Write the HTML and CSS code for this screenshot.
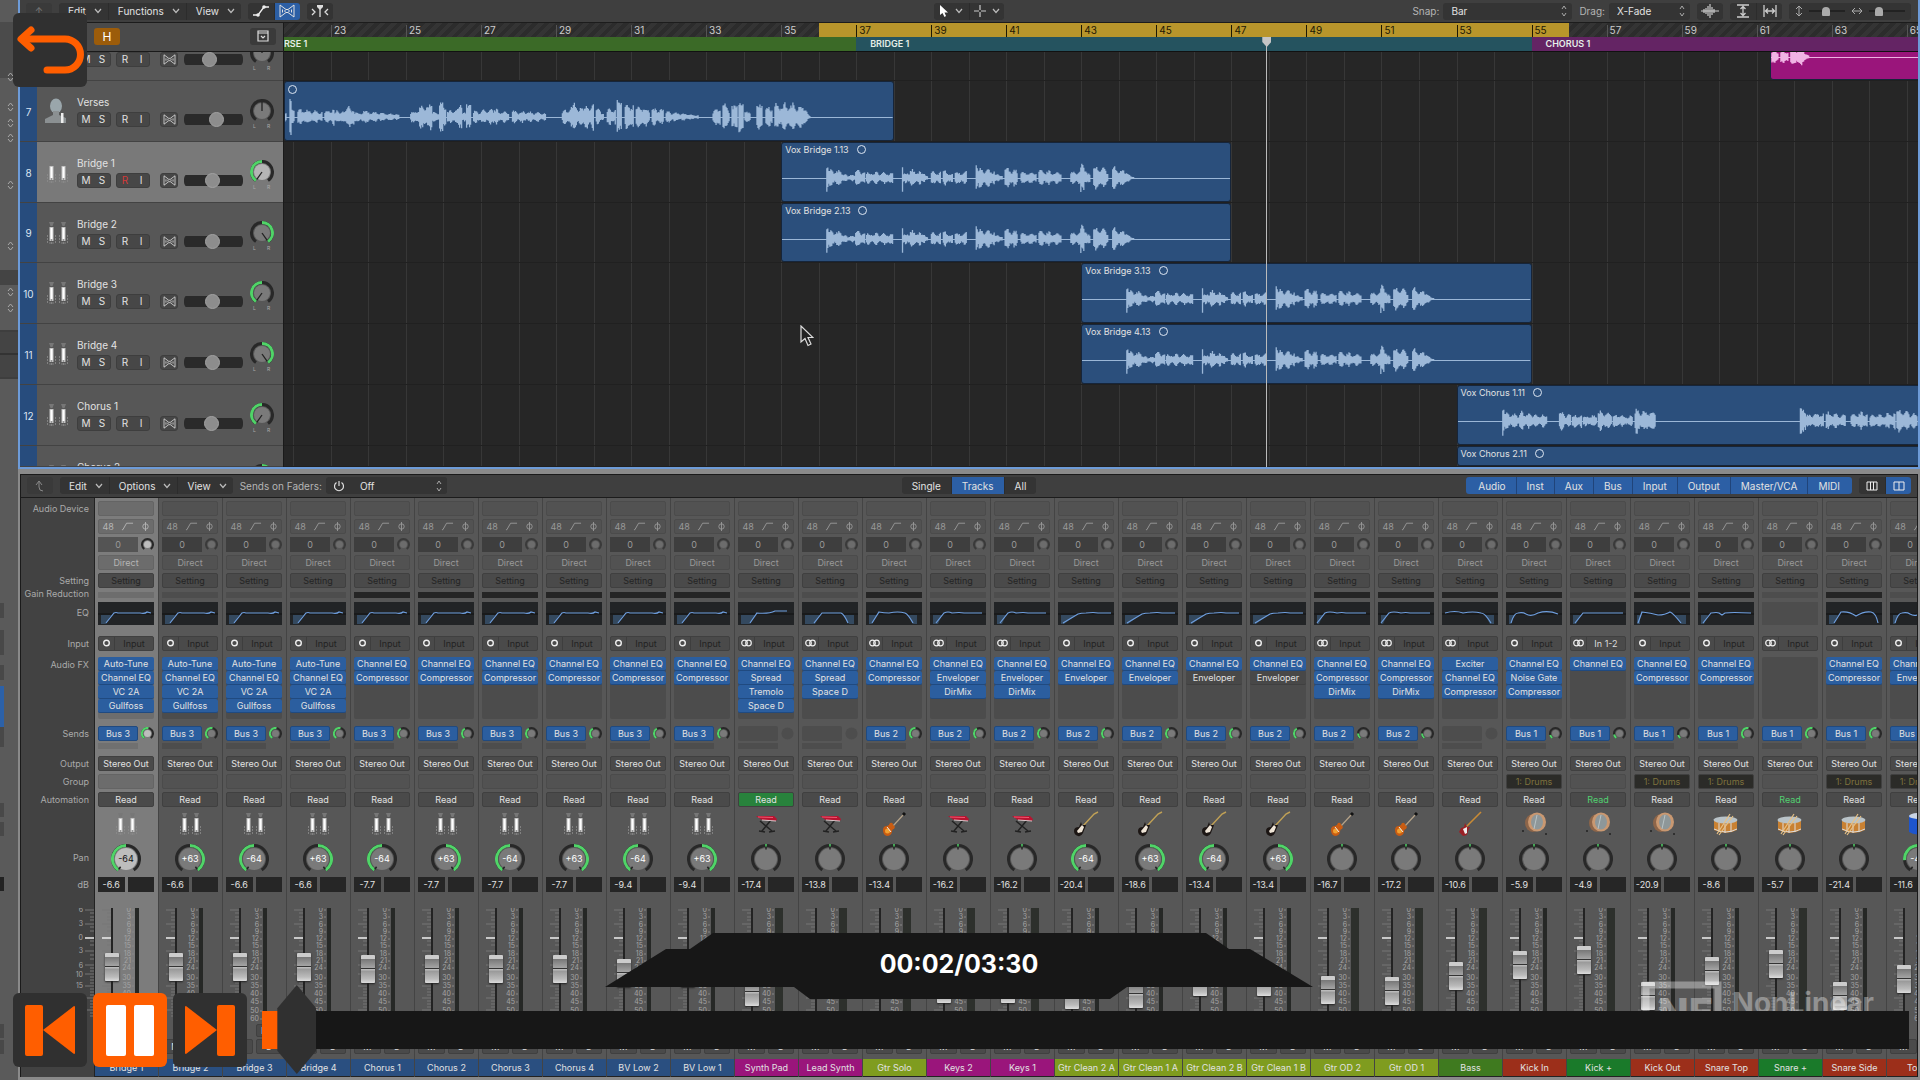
FILE: index.html
```html
<!DOCTYPE html>
<html lang="en">
<head>
  <meta charset="UTF-8">
  <meta name="viewport" content="width=device-width, initial-scale=1.0">
  <title>Vocal Mixing</title>

  <link rel="stylesheet" href="styles.css">
</head>
<body>
  <svg class="defs" aria-hidden="true">
    <symbol id="chev" viewBox="0 0 8 6"><path d="M1 1l3 3.5L7 1" fill="none" stroke="#bbb" stroke-width="1.2"/></symbol>
    <symbol id="flex" viewBox="0 0 18 14"><path d="M2 1l6 4.500h2L16 1v12l-6-4.500H8L2 13zM4.500 5.500v3M7 6v2M11 6v2M13.500 5.500v3" fill="none" stroke="currentColor"/></symbol>
    <symbol id="lowcut" viewBox="0 0 14 10"><path d="M1 9h1l4-7h7" fill="none" stroke="currentColor"/></symbol>
    <symbol id="phase" viewBox="0 0 10 12"><circle cx="5" cy="6" r="3" fill="none" stroke="currentColor"/><path d="M5 1v10" stroke="currentColor"/></symbol>
    <symbol id="mono" viewBox="0 0 12 10"><circle cx="6" cy="5" r="2.800" fill="none" stroke="#eee" stroke-width="1.400"/></symbol>
    <symbol id="stereo" viewBox="0 0 12 10"><circle cx="4" cy="5" r="2.800" fill="none" stroke="#eee" stroke-width="1.200"/><circle cx="8" cy="5" r="2.800" fill="none" stroke="#eee" stroke-width="1.200"/></symbol>

    <symbol id="mics" viewBox="0 0 26 26">
      <g id="mic"><path d="M5 2h5L8.500 6h-2z" fill="#777"/><rect x="5.500" y="7" width="4" height="14" fill="#c4c4c4"/><rect x="6.500" y="8" width="2" height="11" fill="#fff"/><path d="M3.500 15v9M11.500 15v9M5 23h5M7.500 19v5" stroke="#8c8c8c" stroke-width=".8" stroke-dasharray="2 1"/></g>
      <use href="#mic" x="12"/>
    </symbol>
    <symbol id="singer" viewBox="0 0 26 26"><ellipse cx="12" cy="8" rx="6" ry="7.500" fill="#9aa6ab"/><path d="M9 13h6v4l7 3v5H1v-4l8-4z" fill="#8b9092"/><rect x="17" y="15" width="2.500" height="10" fill="#eee"/></symbol>
    <symbol id="synth" viewBox="0 0 26 26"><path d="M7 10l12 10M18 9L9 20M6 20l6 1M16 21l6-1" stroke="#222" stroke-width="1.500"/><path d="M3 5l18 0 3 3-1 2-14-1z" fill="#b71430"/><path d="M5 6l15 .5" stroke="#ef5770"/><path d="M9 9l14 1" stroke="#eee" stroke-width=".8"/></symbol>
    <symbol id="lespaul" viewBox="0 0 26 26"><path d="M12 15L23 3" stroke="#b5a389" stroke-width="1.200"/><path d="M22 4l2-2" stroke="#111" stroke-width="3"/><path d="M2 19q0-4 4-4 2 0 3-3 3-1 3 2 3 1 1 4-2 0-2 3-1 4-5 4-4-1-4-6z" fill="#c95c12"/><ellipse cx="6.500" cy="20" rx="2.500" ry="2.500" fill="#f0a030"/><path d="M6 16l4 5" stroke="#eee"/></symbol>
    <symbol id="strat" viewBox="0 0 26 26"><path d="M10 15L21 3l4-2" fill="none" stroke="#bfa056" stroke-width="1.500"/><path d="M1 20q0-4 5-4l2-5 1 3 4 0-1 3q-1 2-2 5-2 4-5 3-4-1-4-5z" fill="#1c1614"/><path d="M4 20l5-6 2 2-2 5-4 1z" fill="#eee4d6"/></symbol>
    <symbol id="bass" viewBox="0 0 26 26"><path d="M8 17L24 1" stroke="#c98b35" stroke-width="1.600"/><path d="M2 21l2-4 3-1 1-4 2 4 3 0-2 4-1 4-4 1z" fill="#9a2026"/><path d="M6 18l4-2v6l-2 1z" fill="#eee"/></symbol>
    <symbol id="kick" viewBox="0 0 26 26"><ellipse cx="12" cy="12" rx="8" ry="9" fill="#8d6549"/><ellipse cx="16" cy="11" rx="9" ry="9.500" fill="#c99871"/><ellipse cx="16" cy="11" rx="6" ry="7.500" fill="#8e9799"/><path d="M16 4l-3 14" stroke="#b9c3c5"/><circle cx="2" cy="20" r="1" fill="#222"/><circle cx="25" cy="23" r="1" fill="#222"/></symbol>
    <symbol id="snare" viewBox="0 0 26 26"><path d="M1 9v10q12 6 23 0V9z" fill="#c98132"/><path d="M1 18q12 6 23 0M6 12v9M12 13v9M18 12v9" fill="none" stroke="#ddd"/><ellipse cx="12.500" cy="9" rx="12" ry="3.500" fill="#b9c3c8"/><path d="M4 23L17 3M6 24L20 5" stroke="#e8c184" stroke-width="1.200"/></symbol>
    <symbol id="tom" viewBox="0 0 26 26"><path d="M4 4v17q9 5 18 0V4z" fill="#1e55cc"/><ellipse cx="13" cy="5" rx="9" ry="3" fill="#c9d4e4"/></symbol>
  </svg>

  <div class="app">
    <aside class="inspector">
      <svg width="18" height="1080">
        <path d="M0 22h18v56H0z" fill="#4b4b4b"/>
        <path d="M0 270h18v15H0z" fill="#444"/>
        <path d="M0 331h18M0 354h18M0 378h18" stroke="#222" stroke-width="1"/>
        <path d="M0 332h18v45H0z" fill="#444"/><path d="M0 354h18" stroke="#222"/>
        <g fill="none" stroke="#aaa" id="steppers"></g>
        <path d="M0 603h4v15H0zM0 630h4v25H0zM0 665h4v15H0zM0 727h4v20H0zM0 803h4v14H0zM0 822h4v14H0zM0 1024h4v14H0zM0 1040h4v14H0z" fill="#484848"/>
        <path d="M0 686h4v41H0z" fill="#2c61a8"/><path d="M0 877h4v14H0z" fill="#222"/>
      </svg>
    </aside>

    <main class="workspace">
      <section class="arrange">
        <header class="toolbar">
          <div class="tools">
            <button class="icon-button up" aria-label="Up">↑</button>
            <div class="group menus">
              <button>Edit<svg><use href="#chev"/></svg></button>
              <button>Functions<svg><use href="#chev"/></svg></button>
              <button>View<svg><use href="#chev"/></svg></button>
            </div>
            <div class="group icons">
              <button aria-label="Automation"><svg width="18" height="14" viewBox="0 0 18 14"><path d="M1 11h5l6-8h5" fill="none" stroke="#eee" stroke-width="1.300"/><circle cx="6" cy="11" r="1.800" fill="#eee"/><circle cx="12" cy="3" r="1.800" fill="#eee"/></svg></button>
              <button class="on" aria-label="Flex"><svg width="18" height="14"><use href="#flex"/></svg></button>
            </div>
            <div class="group icons">
              <button aria-label="Catch playhead"><svg width="18" height="14" viewBox="0 0 18 14"><path d="M1 5l3 3-3 3M17 5l-3 3 3 3M9 4v9" fill="none" stroke="#ddd" stroke-width="1.300"/><path d="M6 1h6v2L9 6 6 3z" fill="#ddd"/></svg></button>
            </div>
          </div>
          <div class="group icons">
            <button class="wide" aria-label="Pointer tool"><svg width="10" height="14" viewBox="0 0 10 14"><path d="M1 1v10l2.500-2 2 4 1.500-1-1.500-3.500H9z" fill="#fff"/></svg><svg class="chev"><use href="#chev"/></svg></button>
            <button class="wide" aria-label="Marquee tool"><svg width="12" height="12" viewBox="0 0 12 12"><path d="M6 0v5M6 7v5M0 6h5M7 6h5" stroke="#ccc" stroke-width="1.200"/></svg><svg class="chev"><use href="#chev"/></svg></button>
          </div>
          <div class="tools end">
            <label for="snap">Snap:</label>
            <select id="snap" class="snap"><option>Bar</option></select>
            <label for="drag">Drag:</label>
            <select id="drag" class="drag"><option>X-Fade</option></select>
            <div class="group icons">
              <button aria-label="Waveform zoom"><svg width="18" height="14" viewBox="0 0 18 14"><path d="M0 7h18M3 5v4M5 4v6M7 2v10M9 0v14M11 3v8M13 5v4" stroke="#ccc" stroke-width="1.200"/></svg></button>
            </div>
            <div class="group icons">
              <button aria-label="Fit height"><svg width="14" height="14" viewBox="0 0 14 14"><path d="M1 1h12M1 13h12M7 3v8M4.500 5L7 2.500 9.500 5M4.500 9L7 11.500 9.500 9" fill="none" stroke="#ccc" stroke-width="1.300"/></svg></button>
              <button aria-label="Fit width"><svg width="14" height="14" viewBox="0 0 14 14"><path d="M1 1v12M13 1v12M3 7h8M5 4.500L2.500 7 5 9.500M9 4.500L11.500 7 9 9.500" fill="none" stroke="#ccc" stroke-width="1.300"/></svg></button>
            </div>
            <div class="group zooms">
              <svg width="8" height="12" viewBox="0 0 8 12"><path d="M4 1v10M1 4l3-3 3 3M1 8l3 3 3-3" fill="none" stroke="#aaa"/></svg>
              <input type="range" aria-label="Vertical zoom" value="45">
              <svg width="12" height="8" viewBox="0 0 12 8"><path d="M1 4h10M4 1L1 4l3 3M8 1l3 3-3 3" fill="none" stroke="#aaa"/></svg>
              <input type="range" aria-label="Horizontal zoom" value="20">
            </div>
          </div>
        </header>

        <div class="arrange-body">
          <div class="track-column">
            <div class="track-tools">
              <button class="hide-button">H</button>
              <button class="config-button" aria-label="Track header options"><svg width="12" height="12" viewBox="0 0 12 12"><path d="M1 1h10v10H1zM1 3h10M4 6l2 2 2-2" fill="none" stroke="#ddd" stroke-width="1.200"/></svg></button>
            </div>
            <div class="tracks rows" id="tracks"></div>
          </div>
          <div class="timeline">
            <div class="ruler" id="ruler"></div>
            <div class="markers" id="markers"></div>
            <div class="canvas">
              <div class="gridlines" id="gridlines"></div>
              <div class="lanes rows" id="lanes"></div>
            </div>
            <div class="playhead" id="playhead"></div>
          </div>
        </div>
      </section>

      <section class="mixer">
        <header class="toolbar">
          <div class="tools">
            <button class="icon-button" aria-label="Up"><svg width="10" height="12" viewBox="0 0 10 12"><path d="M1 5l3-4 3 4M4 1v6q0 4 4 4" fill="none" stroke="#888"/></svg></button>
            <div class="group menus">
              <button>Edit<svg><use href="#chev"/></svg></button>
              <button>Options<svg><use href="#chev"/></svg></button>
              <button>View<svg><use href="#chev"/></svg></button>
            </div>
            <label for="sends">Sends on Faders:</label>
            <div class="group sends-group">
              <button aria-label="Sends on faders power"><svg width="12" height="12" viewBox="0 0 12 12"><path d="M6 1v5M3.500 2.500a4.500 4.500 0 1 0 5 0" fill="none" stroke="#ddd" stroke-width="1.200"/></svg></button>
              <select id="sends"><option>Off</option></select>
            </div>
          </div>
          <div class="group tabs">
            <button>Single</button>
            <button class="on">Tracks</button>
            <button>All</button>
          </div>
          <div class="tools end">
            <div class="group filters">
              <button>Audio</button><button>Inst</button><button>Aux</button><button>Bus</button><button>Input</button><button>Output</button><button>Master/VCA</button><button>MIDI</button>
            </div>
            <div class="group icons">
              <button aria-label="Narrow strips"><svg width="12" height="10" viewBox="0 0 12 10"><path d="M1 1h10v8H1zM4.500 1v8M7.500 1v8" fill="none" stroke="#eee"/></svg></button>
              <button class="on" aria-label="Wide strips"><svg width="12" height="10" viewBox="0 0 12 10"><path d="M1 1h10v8H1zM6 1v8" fill="none" stroke="#eee"/></svg></button>
            </div>
          </div>
        </header>
        <div class="mixer-body">
          <div class="labels strip-rows">
            <span class="l-device">Audio Device</span>
            <span class="l-setting">Setting</span>
            <span class="l-gain">Gain Reduction</span>
            <span class="l-eq">EQ</span>
            <span class="l-input">Input</span>
            <span class="l-fx">Audio FX</span>
            <span class="l-sends">Sends</span>
            <span class="l-output">Output</span>
            <span class="l-group">Group</span>
            <span class="l-auto">Automation</span>
            <span class="l-pan">Pan</span>
            <span class="l-db">dB</span>
            <svg class="l-scale" width="60" height="114" id="label-scale"></svg>
          </div>
          <div class="strips" id="strips"></div>
        </div>
      </section>
    </main>
  </div>

  <!-- video player -->
  <button class="player-button back" aria-label="Back">
    <svg viewBox="0 0 74 74"><path d="M10 26h42a15 15 0 0 1 0 31H34" fill="none" stroke="#ff5e00" stroke-width="7" stroke-linecap="round"/><path d="M18 17L8 26l10 9" fill="none" stroke="#ff5e00" stroke-width="7" stroke-linecap="round" stroke-linejoin="round"/></svg>
  </button>

  <svg class="cursor" width="14" height="22" viewBox="0 0 14 22"><path d="M1 1v16l4-3.500 3 7 3-1.500-3-6.500h5z" fill="#222" stroke="#ddd" stroke-width="1.200"/></svg>

  <div class="watermark">
    <svg width="84" height="60" viewBox="0 0 84 60"><path d="M4 58V4h72v54" fill="none" stroke="#fff" stroke-width="7"/><text x="16" y="46" font-size="40" font-weight="800" fill="#fff">NE</text></svg>
    <span>NonLinear</span>
  </div>

  <div class="time">
    <svg viewBox="0 0 708 66"><path d="M0 54L61 16h24L108 0h493l23 16h21l63 38H522l-17 12H205l-16-12z" fill="#171717"/></svg>
    <span>00:02/03:30</span>
  </div>

  <div class="player">
    <button class="player-button" aria-label="Previous"><svg viewBox="0 0 74 74"><rect x="12" y="12" width="18" height="51" rx="2" fill="#ff5e00"/><path d="M30 37L61 13q1 0 1 1v46q0 1-1 1z" fill="#ff5e00"/></svg></button>
    <button class="player-button pause" aria-label="Pause"><svg viewBox="0 0 74 74"><rect x="13" y="12" width="20" height="51" rx="2" fill="#fff"/><rect x="41" y="12" width="20" height="51" rx="2" fill="#fff"/></svg></button>
    <button class="player-button" aria-label="Next"><svg viewBox="0 0 74 74"><rect x="44" y="12" width="18" height="51" rx="2" fill="#ff5e00"/><path d="M44 37L13 13q-1 0-1 1v46q0 1 1 1z" fill="#ff5e00"/></svg></button>
    <input class="seek" type="range" min="0" max="210" value="2" aria-label="Seek">
  </div>

  <script src="script.js"></script>
</body>
</html>
```
FILE: styles.css
```css
* {
  box-sizing: border-box;
}

body {
  margin: 0;
  height: 100vh;
  overflow: hidden;
  background: #8a8a8a;
  color: #e2e2e2;
  font-family: Inter, "Liberation Sans", sans-serif;
  font-size: 10px;
}

button,
select,
input {
  font: inherit;
  color: inherit;
  margin: 0;
  padding: 0;
  border: none;
  background: none;
}

svg {
  display: block;
  flex: none;
}

.defs {
  position: absolute;
  width: 0;
  height: 0;
}

.app {
  display: flex;
  height: 100vh;
  background: #8a8a8a;
}

.inspector {
  flex: 0 0 18px;
  overflow: hidden;
  background: #5a5a5a;
}

.workspace {
  flex: 1;
  min-width: 0;
  display: flex;
  flex-direction: column;
  padding: 0 0 3px 0;
}

/* toolbars */
.toolbar {
  flex: 0 0 23px;
  display: grid;
  grid-template-columns: 1fr auto 1fr;
  align-items: center;
  padding: 0 7px 0 6px;
  background: #3f3f3f;
  border-bottom: 1px solid #1c1c1c;
}

.tools {
  display: flex;
  align-items: center;
  gap: 7px;
}

.tools.end {
  justify-content: flex-end;
}

.tools label {
  color: #b5b5b5;
  margin-right: -3px;
}

.group {
  display: flex;
  height: 17px;
  background: #343434;
  border-radius: 3px;
  overflow: hidden;
}

.group button + button {
  border-left: 1px solid #2c2c2c;
}

.group .on {
  background: #2c5fa5;
}

.icon-button {
  width: 26px;
  height: 17px;
  display: grid;
  place-content: center;
  border-radius: 3px;
  background: #3a3a3a;
  color: #777;
}

.menus button {
  display: flex;
  align-items: center;
  gap: 8px;
  padding: 0 6px 0 9px;
}

.menus svg,
.chev {
  width: 8px;
  height: 6px;
}

.icons button {
  width: 26px;
  display: grid;
  place-content: center;
}

.icons .wide {
  width: 35px;
  grid-auto-flow: column;
  align-items: center;
  gap: 6px;
}

select {
  appearance: none;
  height: 17px;
  padding: 0 8px;
  border-radius: 3px;
  background: #343434 url("data:image/svg+xml,%3Csvg xmlns='http://www.w3.org/2000/svg' width='6' height='12'%3E%3Cpath d='M1 4l2-3 2 3M1 8l2 3 2-3' fill='none' stroke='%23aaa'/%3E%3C/svg%3E") no-repeat right 5px center;
}

.snap {
  width: 129px;
}

.drag {
  width: 81px;
}

.sends-group button {
  width: 26px;
  display: grid;
  place-content: center;
}

.sends-group select {
  width: 95px;
}

.tabs button {
  padding: 0 10px;
}

.filters {
  padding: 0 2px;
  background: #2c5fa5;
}

.filters button {
  padding: 0 10px;
}

.filters button + button {
  border-left: 1px solid #20447a;
}

.zooms {
  align-items: center;
  gap: 6px;
  padding: 0 6px;
}

.zooms input {
  appearance: none;
  width: 36px;
  height: 12px;
  background: linear-gradient(#222, #222) center / 100% 2px no-repeat;
}

.zooms input::-webkit-slider-thumb {
  appearance: none;
  width: 8px;
  height: 9px;
  border-radius: 4px 4px 1px 1px;
  background: #aaa;
}

/* arrange window */
.arrange {
  flex: 0 0 43.4vh;
  display: flex;
  flex-direction: column;
  overflow: hidden;
  border: 2px solid #6d9bd8;
  border-top: none;
}

.arrange-body {
  flex: 1;
  min-height: 0;
  display: flex;
}

.track-column {
  flex: 0 0 264px;
  display: flex;
  flex-direction: column;
  background: #4a4a4a;
  border-right: 1px solid #1a1a1a;
}

.track-tools {
  flex: 0 0 29px;
  display: flex;
  justify-content: space-between;
  align-items: center;
  padding: 0 7px 2px 74px;
  border-bottom: 1px solid #1a1a1a;
}

.hide-button {
  width: 26px;
  height: 17px;
  border-radius: 3px;
  background: #9c5c0a;
  color: #fff;
  font-size: 12px;
}

.config-button {
  width: 26px;
  height: 17px;
  border-radius: 3px;
  background: #3a3a3a;
  display: grid;
  place-content: center;
}

.rows {
  flex: 1;
  min-height: 0;
  display: grid;
  grid-template-rows: 29px repeat(6, 1fr) 21px;
}

.track {
  display: flex;
  overflow: hidden;
  background: #575757;
  border-bottom: 1px solid #434343;
}

.track.selected {
  background: #797979;
}

.track:first-child {
  align-items: flex-end;
  padding-bottom: 13px;
}

.track-number {
  flex: 0 0 17px;
  align-self: stretch;
  display: grid;
  place-content: center;
  padding-top: 2px;
  background: #274c7d;
  color: #dde6f2;
}

.track-icon {
  width: 26px;
  height: 26px;
  margin: 17px 7px 0 7px;
}

.track-main {
  width: 107px;
  padding-top: 14px;
}

.track-name {
  height: 14px;
  line-height: 14px;
  white-space: nowrap;
}

.track-buttons {
  display: flex;
  gap: 5px;
  margin-top: 3px;
}

.track-buttons span {
  display: flex;
  height: 15px;
  border-radius: 3px;
  background: #474747;
  border: 1px solid #3e3e3e;
}

.track-buttons button {
  width: 16px;
  line-height: 13px;
  display: grid;
  place-content: center;
}

.track-buttons span:last-child {
  margin-left: 5px;
}

.track-buttons .armed {
  color: #d43a3a;
}

.volume {
  appearance: none;
  flex: none;
  width: 59px;
  height: 15px;
  margin-top: 31px;
  background: linear-gradient(#2a2a2a, #2a2a2a) center / 100% 11px no-repeat;
  border-radius: 6px;
}

.volume::-webkit-slider-thumb {
  appearance: none;
  width: 15px;
  height: 15px;
  border-radius: 50%;
  background: #8d8d8d;
  border: 1px solid #a2a2a2;
}

.track-pan {
  margin: 18px 0 0 7px;
}

.track:first-child .track-pan {
  margin-bottom: -6px;
}

.track-pan text {
  font-size: 5px;
  fill: #aaa;
}

.timeline {
  flex: 1;
  min-width: 0;
  display: flex;
  flex-direction: column;
  position: relative;
  overflow: hidden;
  background: #262626;
}

.ruler {
  flex: 0 0 14px;
  position: relative;
  overflow: hidden;
  background: repeating-linear-gradient(135deg, #2c2c2c 0 4px, #343434 4px 8px);
}

.cycle {
  position: absolute;
  height: 100%;
  background: #b8952b;
}

.bar-number {
  position: absolute;
  top: 2px;
  height: 12px;
  line-height: 10px;
  padding-left: 2px;
  border-left: 1px solid #555;
  color: #ccc;
}

.bar-number.in-cycle {
  color: #1d1804;
  border-color: #1d1804;
}

.markers {
  flex: 0 0 15px;
  position: relative;
  border-bottom: 1px solid #111;
  overflow: hidden;
}

.marker {
  position: absolute;
  height: 100%;
  padding-left: 14px;
  line-height: 14px;
  font-size: 9px;
  font-weight: 600;
  color: #e6efe9;
}

.marker.verse {
  background: #3b6a27;
  padding-left: 0;
}

.marker.bridge {
  background: #25535f;
}

.marker.chorus {
  background: #642464;
}

.canvas {
  flex: 1;
  min-height: 0;
  display: grid;
}

.gridlines,
.lanes {
  grid-area: 1 / 1;
  position: relative;
}

.gridlines i {
  position: absolute;
  height: 100%;
  width: 1px;
  background: #373737;
}

.lane {
  position: relative;
  overflow: hidden;
  border-bottom: 1px solid #202020;
}

.region {
  position: absolute;
  top: 0;
  bottom: 0;
  overflow: hidden;
  border-radius: 3px;
  background: #2b4f7c;
  border: 1px solid #16253a;
  font-size: 9px;
  line-height: 13px;
  white-space: nowrap;
}

.region.pink {
  top: -31px;
  background: #9a157b;
}

.region svg {
  position: absolute;
  left: 0;
  top: 0;
  width: 100%;
  height: 58px;
}

.region .title {
  display: flex;
  align-items: center;
  gap: 8px;
  padding-left: 3px;
}

.region .title::after {
  content: "";
  width: 7px;
  height: 7px;
  border: 1px solid #dde6f2;
  border-radius: 50%;
}

.region .title:empty {
  height: 15px;
}

.playhead {
  position: absolute;
  top: 14px;
  bottom: 0;
  width: 1px;
  background: #bbb;
}

.playhead::before {
  content: "";
  position: absolute;
  left: -4px;
  width: 9px;
  height: 10px;
  background: #c5c5c5;
  clip-path: polygon(0 0, 100% 0, 100% 50%, 50% 100%, 0 50%);
}

/* mixer */
.mixer {
  flex: 1;
  min-height: 0;
  margin: 5px 2px 0 2px;
  display: flex;
  flex-direction: column;
  overflow: hidden;
  background: #575757;
  border: 1px solid #1a1a1a;
  border-bottom: none;
}

.mixer .toolbar {
  padding-right: 6px;
}

.mixer-body {
  flex: 1;
  min-height: 0;
  display: flex;
}

.strip-rows {
  display: grid;
  gap: 3px;
  padding-top: 3px;
  grid-template-columns: 100%;
  grid-template-rows: 15px 15px 15px 15px 15px 7px 24px 23px 65px 28px 18px 15px 15px 28px 33px 15px 1fr 12px 14px 20px;
  align-items: end;
  font-size: 9px;
}

.labels {
  flex: 0 0 74px;
  padding-right: 5px;
  background: #424242;
  border-right: 1px solid #222;
  color: #aaa;
  text-align: right;
  line-height: 15px;
  white-space: nowrap;
}

.l-device { grid-row: 1; }
.l-setting { grid-row: 5; }
.l-gain { grid-row: 6; line-height: 9px; }
.l-eq { grid-row: 7; align-self: center; }
.l-input { grid-row: 8; }
.l-fx { grid-row: 9; align-self: start; padding-top: 3px; }
.l-sends { grid-row: 10; align-self: start; padding-top: 4px; }
.l-output { grid-row: 11; }
.l-group { grid-row: 12; }
.l-auto { grid-row: 13; }
.l-pan { grid-row: 15; align-self: center; }
.l-db { grid-row: 16; }

.l-scale {
  grid-row: 17;
  align-self: start;
  justify-self: end;
  margin: 13px -5px 0 0;
}

.l-scale text,
.fader text {
  font-size: 7px;
  fill: #a4a4a4;
  text-anchor: end;
}

.strips {
  flex: 1;
  min-width: 0;
  display: flex;
  overflow: hidden;
}

.strip {
  flex: 0 0 64px;
  padding-left: 3px;
  padding-right: 4px;
  border-right: 1px solid #444;
}

.strip.selected {
  background: #7c7c7c;
}

.slot {
  height: 15px;
  width: 100%;
  display: flex;
  justify-content: center;
  align-items: center;
  border-radius: 2px;
  background: #4a4a4a;
  border: 1px solid #404040;
  white-space: nowrap;
}

.slot.faint {
  background: #525252;
  border-color: #4b4b4b;
  color: #999;
}

.selected .slot.faint {
  background: #6c6c6c;
  border-color: #646464;
  color: #b5b5b5;
}

.slot.three {
  justify-content: space-around;
}

.slot.setting {
  color: #242424;
}

.pair {
  display: flex;
  width: 100%;
  gap: 3px;
  align-items: center;
}

.pair.record {
  justify-content: flex-end;
}

.record .slot {
  width: 26px;
  height: 13px;
  justify-content: flex-start;
  padding-left: 4px;
}

.gain {
  flex: 1;
  height: 15px;
  line-height: 15px;
  text-align: center;
  background: #3e3e3e;
  color: #999;
}

.selected .gain {
  background: #545454;
}

.gr {
  height: 6px;
  background: #4d4d4d;
}

.selected .gr {
  background: #6d6d6d;
}

.gr.active {
  background: #252525;
}

.eq {
  width: 100%;
  height: 23px;
  background: #222426;
}

.eq.none {
  background: #4d4d4d;
}

.input-slot span {
  flex: 1;
  line-height: 13px;
  text-align: center;
  border-left: 1px solid #3e3e3e;
  color: #222;
}

.input-slot .live {
  color: #ddd;
}

.fx-list {
  height: 62px;
  width: 100%;
  background: #4c4c4c;
  border-radius: 2px;
}

.selected .fx-list {
  background: #6d6d6d;
}

.fx-list button {
  display: block;
  width: 100%;
  height: 14px;
  line-height: 13px;
  white-space: nowrap;
  border-radius: 2px;
  background: #2b5e9f;
  border-bottom: 1px solid #204a80;
}

.fx-list .bypassed {
  background: #484848;
  border-color: #404040;
}

.sends {
  align-self: stretch;
  padding-top: 4px;
}

.send {
  flex: 1;
  height: 15px;
  border-radius: 2px;
  background: #2b5e9f;
  border: 1px solid #204a80;
  line-height: 13px;
}

.send.empty,
.send-next {
  background: #4d4d4d;
  border: none;
}

.send-next {
  width: 40px;
  height: 6px;
  margin-top: 2px;
}

.selected .send-next {
  background: #707070;
}

.slot.drums {
  background: #2b2b28;
  color: #7e713d;
}

.slot.read {
  background: #28823c;
}

.slot.trim {
  color: #52d071;
}

.instrument {
  justify-self: center;
  align-self: center;
}

.pan {
  justify-self: center;
}

.pan text {
  font-size: 9px;
  text-anchor: middle;
  fill: #fff;
}

.selected .pan text {
  fill: #111;
}

.db {
  flex: 1;
  height: 15px;
  line-height: 15px;
  background: #262626;
  text-align: center;
}

.fader {
  align-self: start;
  display: grid;
  padding-top: 13px;
}

.fader svg,
.fader input {
  grid-area: 1 / 1;
}

.fader input {
  appearance: none;
  writing-mode: vertical-lr;
  direction: rtl;
  width: 14px;
  height: 114px;
  margin-left: 7px;
}

.fader input::-webkit-slider-thumb {
  appearance: none;
  width: 14px;
  height: 28px;
  border-radius: 1px;
  background: linear-gradient(#ccc 0 4px, #777 4px, #a5a5a5 13px, #333 13px 14px, #bbb 14px 15px, #999 16px, #bbb 24px, #ddd);
  box-shadow: 0 1px 2px #222;
}

.name {
  height: 18px;
  line-height: 18px;
  margin: 0 -4px 0 -3px;
  text-align: center;
  white-space: nowrap;
  overflow: hidden;
  border-bottom: 1px solid #222;
}

.blue { background: #2a4f80; }
.magenta { background: #9a157b; }
.lime { background: #7f9c1f; }
.green { background: #3f7a1f; }
.red { background: #9c2f1a; }
.emerald { background: #1a7a2a; }

/* player overlay */
.player-button {
  flex: none;
  width: 74px;
  height: 74px;
  border-radius: 6px;
  background: #303030;
}

.player-button.pause {
  background: #ff5e00;
}

.back {
  position: absolute;
  left: 13px;
  top: 13px;
}

.cursor {
  position: absolute;
  left: 800px;
  top: 325px;
}

.player {
  position: absolute;
  left: 13px;
  right: 11px;
  bottom: 5px;
  height: 91px;
  display: flex;
  align-items: center;
  gap: 6px;
}

.seek {
  appearance: none;
  flex: 1;
  height: 91px;
  margin-left: 9px;
  background:
    linear-gradient(#ff5e00, #ff5e00) left center / 20px 38px no-repeat,
    linear-gradient(#171717, #171717) center / 100% 38px no-repeat;
  border-radius: 4px;
}

.seek::-webkit-slider-thumb {
  appearance: none;
  width: 39px;
  height: 89px;
  background: #303030;
  clip-path: polygon(50% 0, 100% 26%, 100% 74%, 50% 100%, 0 74%, 0 26%);
}

.time {
  position: absolute;
  left: 0;
  right: 2px;
  bottom: 81px;
  display: grid;
  place-items: center;
}

.time svg {
  grid-area: 1 / 1;
  width: 708px;
}

.time span {
  grid-area: 1 / 1;
  padding-bottom: 4px;
  color: #fff;
  font-size: 25px;
  font-weight: 700;
}

.watermark {
  position: absolute;
  right: 46px;
  bottom: 39px;
  display: flex;
  gap: 7px;
  opacity: 0.35;
  color: #fff;
  font-size: 28px;
  font-weight: 700;
}

.watermark span {
  padding-top: 5px;
}
```
FILE: script.js
```js
// timeline range, in bars
const FIRST = 21.75;
const SPAN = 43.55;
const pct = bars => (bars / SPAN * 100) + '%';
const at = bar => pct(bar - FIRST);
const $ = id => document.getElementById(id);

// point on a circle, angle clockwise from 12 o'clock
function polar(c, r, deg) {
  const a = (deg - 90) * Math.PI / 180;
  return (c + r * Math.cos(a)).toFixed(1) + ' ' + (c + r * Math.sin(a)).toFixed(1);
}

function arc(c, r, from, to) {
  return `M${polar(c, r, from)}A${r} ${r} 0 ${to - from > 180 ? 1 : 0} 1 ${polar(c, r, to)}`;
}

function knob(size, stroke, from, to, face, needle) {
  const c = size / 2;
  const r = c - stroke / 2;
  let out = `<circle cx="${c}" cy="${c}" r="${r - stroke / 2 - 1}" fill="${face}"/>`;
  out += `<path d="${arc(c, r, -145, 145)}" fill="none" stroke="#282828" stroke-width="${stroke}"/>`;
  if (to > from) out += `<path d="${arc(c, r, from, to)}" fill="none" stroke="#50d468" stroke-width="${stroke}"/>`;
  if (needle !== null) out += `<path d="M${polar(c, r * 0.7, needle)}L${polar(c, r - 1, needle)}" stroke="#222" stroke-width="1.500"/>`;
  return out;
}

function panRange(pan) {
  if (pan < 0) return [pan / 64 * 145, 0];
  if (pan > 0) return [0, pan / 63 * 145];
  return [-3, 3];
}

/* ---- waveforms: [from, to, start level, end level] ---- */
const bridgeWave = [[45, 47, 15, 13], [47, 61, 9, 7], [61, 74, 4, 3], [74, 84, 9, 6], [85, 112, 6, 6], [121, 122, 16, 14], [122, 129, 5, 6], [129, 140, 9, 6], [140, 147, 5, 3], [150, 160, 7, 6], [162, 172, 8, 5], [174, 186, 6, 7], [195, 197, 16, 14], [197, 214, 10, 8], [214, 222, 4, 3], [224, 237, 11, 8], [240, 256, 6, 6], [258, 281, 8, 6], [290, 300, 6, 9], [300, 304, 16, 12], [304, 310, 7, 4], [313, 328, 12, 9], [332, 345, 12, 7], [345, 354, 6, 1]];
const verseWave = [[0, 2, 5, 5], [5, 7, 20, 22], [7, 10, 8, 6], [13, 38, 8, 6], [40, 50, 5, 10], [50, 62, 6, 7], [62, 70, 10, 12], [70, 80, 5, 6], [80, 115, 6, 3], [126, 135, 5, 9], [135, 148, 12, 15], [148, 155, 5, 5], [155, 162, 15, 14], [163, 175, 6, 9], [175, 178, 13, 12], [178, 182, 5, 5], [182, 187, 13, 13], [189, 210, 6, 8], [210, 225, 8, 5], [228, 262, 7, 4], [278, 288, 6, 11], [288, 300, 14, 9], [300, 310, 12, 15], [312, 320, 9, 4], [323, 332, 8, 9], [333, 338, 18, 14], [341, 350, 12, 16], [352, 366, 12, 9], [368, 380, 9, 8], [382, 415, 6, 2], [429, 437, 6, 13], [439, 446, 14, 10], [448, 454, 12, 11], [455, 460, 18, 16], [461, 467, 6, 5], [473, 479, 14, 12], [482, 489, 11, 12], [491, 520, 14, 13], [520, 527, 8, 2]];
const chorusWave = [[45, 47, 16, 14], [47, 62, 9, 6], [62, 76, 10, 7], [76, 90, 6, 7], [102, 114, 10, 6], [115, 125, 6, 8], [126, 140, 5, 6], [141, 155, 10, 8], [156, 176, 7, 5], [178, 199, 13, 9], [344, 350, 14, 9], [350, 368, 6, 9], [370, 390, 9, 6], [395, 412, 6, 11], [414, 440, 6, 9], [441, 462, 12, 7]];
const pinkWave = [[1, 8, 7, 6], [10, 18, 7, 6], [20, 30, 9, 10], [30, 34, 10, 6], [34, 39, 4, 1]];

function wave(segments, width, colour) {
  let seed = 7;
  const rnd = () => (seed = seed * 16807 % 2147483647) / 2147483647;
  let d = '';
  segments.forEach(([a, b, l0, l1]) => {
    for (let x = a; x < b; x++) {
      const swell = b - a > 6 ? 0.85 + 0.25 * Math.sin((x - a) * 0.8) : 1;
      const level = (l0 + (l1 - l0) * (x - a) / (b - a)) * swell;
      d += `M${x} ${(35 - level * (0.65 + rnd() * 0.35)).toFixed(1)}V${(35 + level * (0.55 + rnd() * 0.4)).toFixed(1)}`;
    }
  });
  return `<svg viewBox="0 0 ${width} 58" preserveAspectRatio="none"><path d="M0 35.500H${width}" stroke="${colour}"/><path d="${d}" stroke="${colour}" stroke-width="1.300"/></svg>`;
}

/* ---- arrange ---- */
const tracks = [
  { n: '', name: '', icon: '', pan: 0, vol: 40 },
  { n: 7, name: 'Verses', icon: 'singer', pan: 0, vol: 56 },
  { n: 8, name: 'Bridge 1', icon: 'mics', pan: -64, vol: 47, selected: true },
  { n: 9, name: 'Bridge 2', icon: 'mics', pan: 63, vol: 47 },
  { n: 10, name: 'Bridge 3', icon: 'mics', pan: -64, vol: 47 },
  { n: 11, name: 'Bridge 4', icon: 'mics', pan: 63, vol: 47 },
  { n: 12, name: 'Chorus 1', icon: 'mics', pan: -64, vol: 45 },
  { n: '', name: 'Chorus 2', icon: 'mics', pan: 63, vol: 45, last: true }
];

const trackButtons = armed => `<div class="track-buttons">
  <span><button>M</button><button>S</button></span>
  <span><button class="${armed ? 'armed' : ''}">R</button><button>I</button></span>
  <span><button aria-label="Flex"><svg width="15" height="11"><use href="#flex"/></svg></button></span>
</div>`;

$('tracks').innerHTML = tracks.map(t => {
  const [from, to] = panRange(t.pan);
  const needle = t.pan ? (t.pan < 0 ? -145 : 145) : 0;
  return `<div class="track ${t.selected ? 'selected' : ''}">
    <div class="track-number">${t.n}</div>
    <svg class="track-icon"><use href="#${t.icon}"/></svg>
    <div class="track-main">
      <div class="track-name">${t.name}</div>
      ${t.last ? '' : trackButtons(t.selected)}
    </div>
    <input class="volume" type="range" value="${t.vol}" aria-label="${t.name} volume">
    <svg class="track-pan" width="24" height="${t.last ? 24 : 32}"><g>${knob(24, 3, t.pan ? from : 0, t.pan ? to : 0, t.selected ? '#b5b5b5' : '#7a7a7a', null)}<path d="M12 12L${polar(12, 9, needle)}" stroke="#222" stroke-width="1.300"/></g>${t.last ? '' : '<text x="3" y="29">L</text><text x="17" y="29">R</text>'}</svg>
  </div>`;
}).join('');

const lanes = [
  [{ start: 61.35, end: 66, name: '', wave: pinkWave, pink: true }],
  [{ start: 21.75, end: 38, name: '', wave: verseWave }],
  [{ start: 35, end: 47, name: 'Vox Bridge 1.13', wave: bridgeWave }],
  [{ start: 35, end: 47, name: 'Vox Bridge 2.13', wave: bridgeWave }],
  [{ start: 43, end: 55, name: 'Vox Bridge 3.13', wave: bridgeWave }],
  [{ start: 43, end: 55, name: 'Vox Bridge 4.13', wave: bridgeWave }],
  [{ start: 53, end: 66, name: 'Vox Chorus 1.11', wave: chorusWave }],
  [{ start: 53, end: 66, name: 'Vox Chorus 2.11', wave: [] }]
];

$('lanes').innerHTML = lanes.map(regions => '<div class="lane">' + regions.map(r => {
  const len = r.end - r.start;
  return `<div class="region ${r.pink ? 'pink' : ''}" style="left:${at(r.start)};width:${pct(len)}">
    ${wave(r.wave, Math.round(len * 37.5), r.pink ? '#f0b3e4' : '#9cb8d8')}${r.pink ? '' : `<div class="title">${r.name}</div>`}
  </div>`;
}).join('') + '</div>').join('');

let ruler = `<div class="cycle" style="left:${at(36)};width:${pct(20)}"></div>`;
for (let bar = 23; bar <= 65; bar += 2) {
  ruler += `<span class="bar-number ${bar > 36 && bar < 56 ? 'in-cycle' : ''}" style="left:${at(bar)}">${bar}</span>`;
}
$('ruler').innerHTML = ruler;

let lines = '';
for (let bar = 22; bar <= 65; bar++) lines += `<i style="left:${at(bar)}"></i>`;
$('gridlines').innerHTML = lines;

$('markers').innerHTML = [
  ['verse', 'RSE 1', FIRST, 37],
  ['bridge', 'BRIDGE 1', 37, 55],
  ['chorus', 'CHORUS 1', 55, 66]
].map(m => `<div class="marker ${m[0]}" style="left:${at(m[2])};width:${pct(m[3] - m[2])}">${m[1]}</div>`).join('');

$('playhead').style.left = at(47.93);

$('steppers').innerHTML = [77, 107, 123, 138, 185, 246, 292, 308]
  .map(y => `<path d="M8 ${y - 1}l2.500-3 2.500 3M8 ${y + 1}l2.500 3 2.500-3"/>`).join('');

/* ---- mixer ---- */
const eqs = {
  vocal: ['M8 21L16 11q2-1 4 0h22q5 1 7-1l4 1', 'M3 13h10l-5 9H3z'],
  pad: ['M12 21L19 11q12 1 18-2h12', 'M3 13h14l-5 9H3z'],
  lead: ['M12 21L20 11h19q3 1 7 10', 'M3 13h15l-5 9H3zM42 13h10v9h-5z'],
  solo: ['M6 21L13 10q5 1 10 1 9-2 16 0 3 1 8 10', 'M3 13h8l-5 9H3zM43 13h8v9h-4z'],
  keys: ['M6 21L14 11q4-2 8 0 8-1 12 0h18', 'M3 13h9l-4 9H3z'],
  clean: ['M5 21L20 12q3-1 8-1 8-1 12 0h13', 'M3 13h15L6 22H3z'],
  od: ['M3 21L11 11q4-2 12 0 5-1 9 0h20', 'M3 13h6l-4 9H3z'],
  bass: ['M3 11q10-3 18 0 10-2 18 0 4 0 10 10', 'M43 13h9v9h-4z'],
  kick: ['M5 21Q8 11 12 11q5-1 8 1 5 3 12-1 10-3 20 1', 'M3 13h5l-3 9H3z'],
  kickplus: ['M5 21L13 11h40', 'M3 13h8l-5 9H3z'],
  kickout: ['M4 21L8 10q9 1 16 3 7 0 12-3 3 1 11 11', 'M3 13h3v9H3zM41 13h11v9h-5z'],
  snare: ['M5 21L13 11q6-1 8 0l3 2 3-2q6-1 26 0', 'M3 13h7l-4 9H3z'],
  side: ['M8 21L15 10q8-1 15 4 8-5 15-4 5 1 7 11', 'M3 13h9l-4 9H3z'],
  none: null
};

const CH = 'Channel EQ', CO = 'Compressor', EN = 'Enveloper';
const vox = ['Auto-Tune', CH, 'VC 2A', 'Gullfoss'];
// name, colour, icon, pan, dB, cap offset, stereo, fx, send bus, send level, eq, gain reduction
const channels = [
  ['Bridge 1', 'blue', 'mics', -64, '-6.6', 45, 0, vox, 3, 155, 'vocal', 0],
  ['Bridge 2', 'blue', 'mics', 63, '-6.6', 45, 0, vox, 3, 155, 'vocal', 0],
  ['Bridge 3', 'blue', 'mics', -64, '-6.6', 45, 0, vox, 3, 155, 'vocal', 0],
  ['Bridge 4', 'blue', 'mics', 63, '-6.6', 45, 0, vox, 3, 155, 'vocal', 0],
  ['Chorus 1', 'blue', 'mics', -64, '-7.7', 47, 0, [CH, CO], 3, 115, 'vocal', 1],
  ['Chorus 2', 'blue', 'mics', 63, '-7.7', 47, 0, [CH, CO], 3, 115, 'vocal', 1],
  ['Chorus 3', 'blue', 'mics', -64, '-7.7', 47, 0, [CH, CO], 3, 115, 'vocal', 1],
  ['Chorus 4', 'blue', 'mics', 63, '-7.7', 47, 0, [CH, CO], 3, 115, 'vocal', 1],
  ['BV Low 2', 'blue', 'mics', -64, '-9.4', 51, 0, [CH, CO], 3, 115, 'vocal', 1],
  ['BV Low 1', 'blue', 'mics', 63, '-9.4', 51, 0, [CH, CO], 3, 115, 'vocal', 1],
  ['Synth Pad', 'magenta', 'synth', 0, '-17.4', 70, 1, [CH, 'Spread', 'Tremolo', 'Space D'], 0, 0, 'pad', 0],
  ['Lead Synth', 'magenta', 'synth', 0, '-13.8', 61, 1, [CH, 'Spread', 'Space D'], 0, 0, 'lead', 0],
  ['Gtr Solo', 'lime', 'lespaul', 0, '-13.4', 60, 1, [CH, CO], 2, 145, 'solo', 1],
  ['Keys 2', 'magenta', 'synth', 0, '-16.2', 67, 1, [CH, EN, 'DirMix'], 2, 115, 'keys', 0],
  ['Keys 1', 'magenta', 'synth', 0, '-16.2', 67, 1, [CH, EN, 'DirMix'], 2, 115, 'keys', 0],
  ['Gtr Clean 2 A', 'lime', 'strat', -64, '-20.4', 73, 0, [CH, EN], 2, 115, 'clean', 0],
  ['Gtr Clean 1 A', 'lime', 'strat', 63, '-18.6', 72, 0, [CH, EN], 2, 115, 'clean', 0],
  ['Gtr Clean 2 B', 'lime', 'strat', -64, '-13.4', 60, 0, [CH, '-' + EN], 2, 115, 'clean', 0],
  ['Gtr Clean 1 B', 'lime', 'strat', 63, '-13.4', 60, 0, [CH, '-' + EN], 2, 115, 'clean', 0],
  ['Gtr OD 2', 'lime', 'lespaul', 0, '-16.7', 68, 1, [CH, CO, 'DirMix'], 2, 55, 'od', 1],
  ['Gtr OD 1', 'lime', 'lespaul', 0, '-17.2', 69, 1, [CH, CO, 'DirMix'], 2, 55, 'od', 1],
  ['Bass', 'green', 'bass', 0, '-10.6', 54, 1, ['Exciter', CH, CO], 0, 0, 'bass', 1],
  ['Kick In', 'red', 'kick', 0, '-5.9', 43, 0, [CH, 'Noise Gate', CO], 1, 40, 'kick', 1, 'drums'],
  ['Kick +', 'emerald', 'kick', 0, '-4.9', 38, 1, [CH], 1, 45, 'kickplus', 0, 'trim'],
  ['Kick Out', 'red', 'kick', 0, '-20.9', 74, 0, [CH, CO], 1, 40, 'kickout', 1, 'drums'],
  ['Snare Top', 'red', 'snare', 0, '-8.6', 49, 0, [CH, CO], 1, 155, 'snare', 1, 'drums'],
  ['Snare +', 'emerald', 'snare', 0, '-5.7', 42, 1, [], 1, 155, 'none', 0, 'trim'],
  ['Snare Side', 'red', 'snare', 0, '-21.4', 74, 0, [CH, CO], 1, 155, 'side', 1, 'drums'],
  ['Toms', 'red', 'tom', -42, '-11.6', 57, 0, [CH, EN], 1, 155, 'kick', 0, 'drums']
];

const meterMarks = [[0, 2], [3, 9], [6, 17], [9, 24], [12, 31], [15, 38], [18, 46], [21, 53], [24, 60], [30, 70], [35, 78], [40, 86], [45, 94], [50, 103], [60, 111]];

// ticks along the fader path, right edge at x
function ticks(x) {
  let d = '';
  [2, 16, 43, 57, 66, 78, 90, 102].forEach(y => { d += `M${x - 9} ${y}h9`; });
  [5, 9, 12, 19, 23, 33, 37, 47, 51, 60, 63, 69, 72, 75, 81, 84, 87, 93, 96, 99, 105, 108].forEach(y => { d += `M${x - 4} ${y}h4`; });
  return `<path d="${d}" stroke="#777"/><path d="M${x - 9} 30h9" stroke="#eee" stroke-width="1.500"/>`;
}

function faderScale(stereo) {
  let out = ticks(13) + '<path d="M14 0v114" stroke="#232323" stroke-width="2"/>';
  meterMarks.forEach(([n, y]) => {
    out += `<text x="33" y="${y + 2}">${n}</text><path d="M34 ${y}h2" stroke="#888"/>`;
  });
  return out + `<rect x="37" y="0" width="${stereo ? 8 : 4}" height="114" fill="${stereo ? '#2d302c' : '#262826'}"/>`;
}

$('label-scale').innerHTML = ticks(60) +
  [[6, 2], [3, 16], [0, 30], [3, 43], [6, 58], [10, 67], [15, 78]].map(([n, y]) => `<text x="49" y="${y + 2}">${n}</text>`).join('');

$('strips').innerHTML = channels.map((c, i) => {
  const [name, colour, icon, pan, db, cap, stereo, fx, bus, level, eqName, gr, kind] = c;
  const [from, to] = panRange(pan);
  const eq = eqs[eqName];
  const face = i ? '#7a7a7a' : '#bdbdbd';
  const readClass = name === 'Synth Pad' ? 'read' : kind === 'trim' ? 'trim' : '';
  return `<div class="strip strip-rows ${i ? '' : 'selected'}">
    <div class="slot faint"></div>
    <div class="slot faint three"><span>48</span><svg width="13" height="10"><use href="#lowcut"/></svg><svg width="9" height="11"><use href="#phase"/></svg></div>
    <div class="pair"><span class="gain">0</span><svg width="13" height="13" opacity="${i ? 0.6 : 1}">${knob(13, 2, 0, 0, face, null)}</svg></div>
    <button class="slot faint">Direct</button>
    <button class="slot setting">Setting</button>
    <div class="gr ${gr ? 'active' : ''}"></div>
    ${eq ? `<svg class="eq" viewBox="0 0 56 23"><path d="M0 12h56" stroke="#111"/><path d="${eq[1]}" fill="#34495f"/><path d="${eq[0]}" fill="none" stroke="#6f9fdf" stroke-width="1.200"/></svg>` : '<div class="eq none"></div>'}
    <div class="slot input-slot"><svg width="15" height="10"><use href="#${stereo ? 'stereo' : 'mono'}"/></svg><span class="${name === 'Kick +' ? 'live' : ''}">${name === 'Kick +' ? 'In 1-2' : 'Input'}</span></div>
    <div class="fx-list">${fx.map(f => f[0] === '-' ? `<button class="bypassed">${f.slice(1)}</button>` : `<button>${f}</button>`).join('')}</div>
    <div class="sends">
      <div class="pair"><button class="send ${bus ? '' : 'empty'}">${bus ? 'Bus ' + bus : ''}</button><svg width="13" height="13">${bus ? knob(13, 2, -145, -145 + level, face, null) : '<circle cx="6.5" cy="6.5" r="6" fill="#4d4d4d"/>'}</svg></div>
      <div class="send-next"></div>
    </div>
    <button class="slot">Stereo Out</button>
    <div class="slot ${kind === 'drums' ? 'drums' : 'faint'}">${kind === 'drums' ? '1: Drums' : ''}</div>
    <button class="slot ${readClass}">Read</button>
    <svg class="instrument" width="26" height="26"><use href="#${icon}"/></svg>
    <svg class="pan" width="30" height="30">${knob(30, 3, from, to, face, pan < 0 ? -145 : pan > 0 ? 145 : 0)}<text x="15" y="18">${pan ? (pan > 0 ? '+' : '') + pan : ''}</text></svg>
    <div class="pair"><span class="db">${db}</span><span class="db"></span></div>
    <div class="fader">
      <svg width="56" height="114">${faderScale(stereo)}</svg>
      <input type="range" min="0" max="86" value="${86 - cap}" aria-label="${name} level">
    </div>
    <div class="pair record"><button class="slot">R</button></div>
    <div class="pair"><button class="slot">M</button><button class="slot">S</button></div>
    <div class="name ${colour}">${name}</div>
  </div>`;
}).join('');
```
